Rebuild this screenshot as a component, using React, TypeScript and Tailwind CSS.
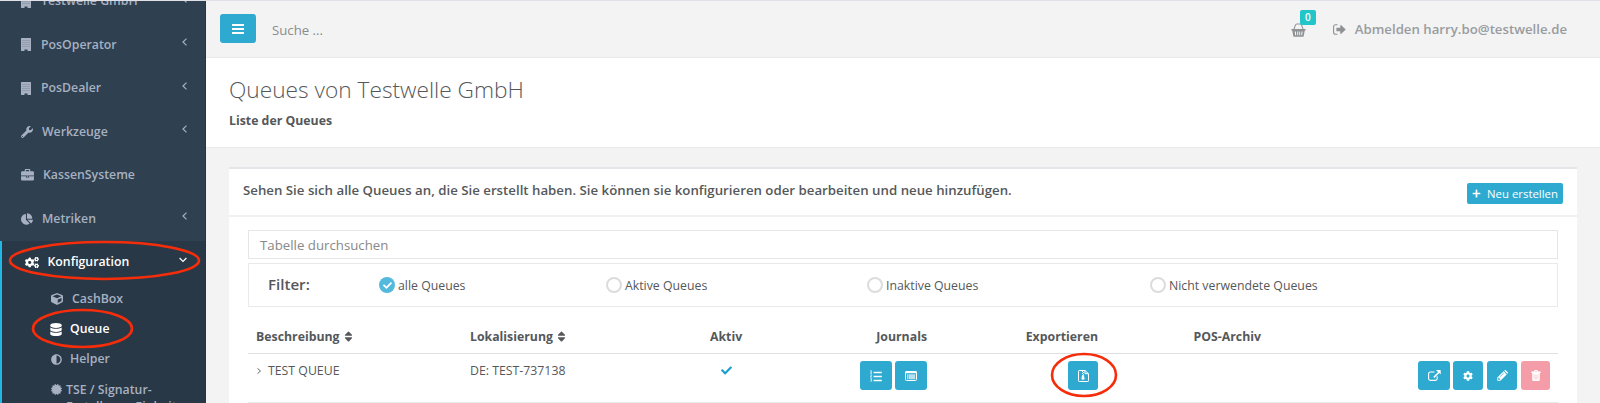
import React from "react";
import {
  FaWrench, FaChartPie, FaCogs, FaCube, FaDatabase, FaAdjust, FaCertificate,
  FaPlus, FaSort, FaCheck, FaCog,
} from "react-icons/fa";

type P = { className?: string };

const Building = ({ className }: P) => (
  <svg viewBox="0 0 10 13" className={className}>
    <path fill="currentColor" fillRule="evenodd" d="M.5 0h9q.5 0 .5.5v12q0 .5-.5.5H6.500v-1.500h-3v1.500h-3q-.5 0-.5-.5V.5Q0 0 .5 0z" />
    <path fill="none" stroke="#2f4050" strokeOpacity=".35" strokeDasharray="1 1" d="M1.500 2.500h7M1.500 4.500h7M1.500 6.500h7M1.500 8.500h7" />
  </svg>
);
const Briefcase = ({ className }: P) => (
  <svg viewBox="0 0 14 13" className={className} fill="currentColor">
    <path fillRule="evenodd" d="M4 2.500V1q0-1 1-1h4q1 0 1 1v1.500h2.800q1.200 0 1.200 1.200V7H0V3.700q0-1.200 1.200-1.200zM5.200 1.200v1.300h3.600V1.200z" />
    <path d="M0 7.800h5.300v1.400h3.400V7.800H14v3.500q0 1.200-1.200 1.200H1.200Q0 12.500 0 11.300zM6.200 7.200h1.600v1.200H6.200z" />
  </svg>
);
const Basket = ({ className }: P) => (
  <svg viewBox="0 0 16 15" className={className}>
    <path fill="none" stroke="currentColor" strokeWidth="1.100" d="M3 7l1.700-4.800Q5 1 6.300 1h3.400q1.300 0 1.600 1.200L13 7" />
    <path fill="currentColor" fillRule="evenodd" d="M1 6.500h14q.8 0 .8.800t-.8.800h-.3l-1.100 5.700q-.2 1-1.200 1H3.600q-1 0-1.200-1L1.300 8.100H1q-.8 0-.8-.8T1 6.500zM4 9l.4 4h1.100l-.3-4zM6.700 9v4h1V9zm2.100 0v4h1V9zm2.500 0-.4 4h1l.6-4z" />
  </svg>
);
const SignOut = ({ className }: P) => (
  <svg viewBox="0 0 13 11" className={className}>
    <path fill="none" stroke="currentColor" strokeWidth="1.100" d="M4.500.8H2.600Q.6.800.6 2.800v5.400q0 2 2 2h1.900" />
    <path fill="currentColor" d="M3.800 3.700h3.500V1.200q.2-.5.700-.2l4.500 4.200q.3.300 0 .6L8 10q-.5.300-.7-.2V7.300H3.800q-.4 0-.4-.4V4.100q0-.4.400-.4z" />
  </svg>
);
const Chevron = ({ className, d }: P & { d: string }) => (
  <svg viewBox="0 0 8 8" className={className}>
    <path fill="none" stroke="currentColor" strokeWidth="1.200" d={d} />
  </svg>
);
const ListOl = () => (
  <svg viewBox="0 0 12 12" className="h-[12px] w-[12px]" stroke="currentColor" fill="none">
    <path strokeWidth="1.300" d="M3.600 2.500h8.200M3.600 6.500h8.200M3.600 10.500h8.200" />
    <path strokeWidth=".8" d="M.4 1l.8-.6V3.200M.3 3.200h1.600M.4 5q1.300-.6 1.300.3L.4 7h1.500M.4 8.700h1.300L1 9.800q1 .1.700 1-.6.900-1.400.4" />
  </svg>
);
const WindowList = () => (
  <svg viewBox="0 0 12 10" className="h-[10px] w-[12px]">
    <rect x=".5" y=".5" width="11" height="9" rx="1" fill="none" stroke="currentColor" />
    <path stroke="currentColor" strokeWidth="2" d="M.5 1.200h11" />
    <path fill="currentColor" fillOpacity=".65" d="M2 3.200h1v5H2zM3.500 3.200H10.200v5H3.500z" />
  </svg>
);
const FileZip = () => (
  <svg viewBox="0 0 11 12" className="h-[12px] w-[11px]">
    <path fill="none" stroke="currentColor" d="M1.200.5H7l3.500 3.200v7.100q0 .7-.7.700H1.200q-.7 0-.7-.7V1.200q0-.7.700-.7zM7 .5v3.200h3.500" />
    <path fill="currentColor" d="M4 1h1v1H4zM5 2h1v1H5zM4 3h1v1H4zM5 4h1v1H5zM4.300 5h1.300l1 3.300q.1 1.500-1.600 1.500T3.400 8.300z" />
  </svg>
);
const ExternalLink = () => (
  <svg viewBox="0 0 13 11" className="h-[11px] w-[13px]">
    <path fill="none" stroke="currentColor" strokeWidth="1.100" d="M6.500 2h-4q-1.900 0-1.900 1.900v4.600q0 1.900 1.900 1.900h4.800q1.900 0 1.900-1.900V6.300" />
    <path fill="currentColor" d="M8.200 0h4.100q.4 0 .4.400v4.100l-1.400-1.400-4.900 4.800-1.100-1.100 4.800-4.900L8.200.4z" />
  </svg>
);
const Pencil = () => (
  <svg viewBox="0 0 11 11" className="h-[11px] w-[11px]" fill="currentColor">
    <path fillRule="evenodd" d="M.3 10.700V7.600L6.600 1.300l3.100 3.100-6.300 6.300zM1.200 8v1.800H3L3.400 9.400 1.600 7.600zM6.500 3 3 6.500l.4.300 3.500-3.500z" />
    <path d="M7.200.7l.5-.5q.5-.4 1 0l2.100 2.100q.4.500 0 1l-.5.500z" />
  </svg>
);
const Trash = () => (
  <svg viewBox="0 0 10 11" className="h-[11px] w-[10px]" fill="currentColor">
    <path fillRule="evenodd" d="M.3 1.600h2.400L3.300.4Q3.500 0 4 0h2q.5 0 .7.400l.6 1.200h2.400v1.300H.3zM3.900 1.600h2.200L5.800.9H4.200z" />
    <path fillRule="evenodd" d="M1.200 2.900h7.600v6.800Q8.800 11 7.700 11H2.300Q1.200 11 1.200 9.700zM2.800 4.400v5h.5v-5zm1.900 0v5h.6v-5zm2 0v5h.5v-5z" />
  </svg>
);
const LEFT = "M5.500 .6L2 4l3.500 3.400";

function NavItem({ icon, label, gap, arrow = true }: { icon: React.ReactNode; label: string; gap: string; arrow?: boolean }) {
  return (
    <div className="flex h-[43.500px] shrink-0 items-center pl-[21px] pr-[16px]">
      {icon}
      <span className={gap}>{label}</span>
      {arrow && <Chevron className="mb-[5px] ml-auto h-[8px] w-[8px]" d={LEFT} />}
    </div>
  );
}

function Ring({ className }: P) {
  return (
    <svg className={"pointer-events-none absolute overflow-visible " + className} preserveAspectRatio="none" viewBox="0 0 100 100">
      <ellipse cx="50" cy="50" rx="50" ry="50" fill="none" stroke="#f62d0b" strokeWidth="2.600" vectorEffect="non-scaling-stroke" />
    </svg>
  );
}

function Radio({ label, checked, className }: { label: string; checked?: boolean; className: string }) {
  return (
    <div className={"flex shrink-0 items-center " + className}>
      <span className={"flex h-4 w-4 shrink-0 items-center justify-center rounded-full " + (checked ? "bg-[#53b9dd] text-white" : "border-2 border-[#dcdcdc] bg-white")}>
        {checked && <FaCheck className="h-[9px] w-[9px]" />}
      </span>
      <span className="mt-[3px] pl-[3px] whitespace-nowrap">{label}</span>
    </div>
  );
}

function Btn({ children, className = "w-8 bg-[#2eaad1]" }: { children: React.ReactNode; className?: string }) {
  return <button className={"flex h-[29px] shrink-0 items-center justify-center rounded-[3px] text-white " + className}>{children}</button>;
}

export default function App() {
  return (
    <div className="flex h-[403px] w-[1600px] overflow-hidden border-t border-[#dfe1e7] bg-[#f3f3f4] font-['Open_Sans',sans-serif] text-[12.3px] text-[#55585b]">
      <aside className="flex h-[402px] w-[206px] shrink-0 flex-col overflow-hidden border-r border-[#22364a] bg-[#2f4050] font-semibold text-[#a7b1c2]">
        <div className="-mt-[21.500px] flex flex-col">
          <NavItem icon={<Building className="h-[13px] w-[10px]" />} label="Testwelle GmbH" gap="pl-[10px]" />
          <NavItem icon={<Building className="h-[13px] w-[10px]" />} label="PosOperator" gap="pl-[10px]" />
          <NavItem icon={<Building className="h-[13px] w-[10px]" />} label="PosDealer" gap="pl-[10px]" />
          <NavItem icon={<FaWrench className="h-[12px] w-[12px]" />} label="Werkzeuge" gap="pl-[9px]" />
          <NavItem icon={<Briefcase className="h-[12px] w-[13px]" />} label="KassenSysteme" gap="pl-[9px]" arrow={false} />
          <NavItem icon={<FaChartPie className="h-[12px] w-[12px]" />} label="Metriken" gap="pl-[9px]" />
        </div>
        <div className="h-[170px] border-l-2 border-[#23b7e5] bg-[#293846]">
          <div className="relative flex h-[43px] items-center pl-[23px] pr-[18px] text-white">
            <FaCogs className="h-[13px] w-[14px]" />
            <span className="pl-[8.500px]">Konfiguration</span>
            <Chevron className="mb-[5px] ml-auto h-[8px] w-[8px]" d="M.6 2L4 5.500 7.400 2" />
            <Ring className="left-[8px] top-[1px] h-[37px] w-[189px]" />
          </div>
          <div className="flex h-[31px] items-center pl-[49px]">
            <FaCube className="h-[12px] w-[12px]" /><span className="pl-[9px]">CashBox</span>
          </div>
          <div className="relative flex h-[30px] items-center pl-[48px] text-white">
            <FaDatabase className="h-[13px] w-[12px]" /><span className="pl-[8px]">Queue</span>
            <Ring className="-top-[5px] left-[31px] h-[37px] w-[99px]" />
          </div>
          <div className="flex h-[30px] items-center pl-[49px]">
            <FaAdjust className="h-[11px] w-[11px]" /><span className="pl-[8px]">Helper</span>
          </div>
          <div className="flex pl-[49px] pt-[6px] leading-[17px]">
            <FaCertificate className="mt-[3px] h-[11px] w-[11px] shrink-0" />
            <span className="pl-[4px]">TSE / Signatur-<br />Erstellungs-Einheit</span>
          </div>
        </div>
      </aside>

      <main className="flex min-w-0 flex-1 flex-col">
        <header className="flex h-[57px] shrink-0 items-center border-b border-[#e7e9eb] pl-[14px] pr-[33px]">
          <button className="mb-[1px] flex h-[29px] w-[36px] flex-col items-center justify-center gap-[2px] rounded-[3px] bg-[#2eaad1]">
            <span className="h-[2px] w-3 bg-white" /><span className="h-[2px] w-3 bg-white" /><span className="h-[2px] w-3 bg-white" />
          </button>
          <span className="pl-[16px] pt-[4px] text-[13.2px] text-[#8b8b8b]">Suche ...</span>
          <div className="relative ml-auto mt-[1px] text-[#8f9294]">
            <Basket className="h-[14px] w-[15px]" />
            <span className="absolute -top-[13px] left-[9px] flex h-[15px] w-[16px] items-center justify-center rounded-[2px] bg-[#23c6c8] text-[10px] font-semibold text-white">0</span>
          </div>
          <SignOut className="ml-[27px] mt-[1px] h-[11px] w-[13px] text-[#8f9294]" />
          <span className="pl-[9px] pt-[2px] text-[13.230px] font-semibold text-[#999c9e]">Abmelden harry.bo@testwelle.de</span>
        </header>
        <section className="h-[90px] shrink-0 border-b border-[#e9eaec] bg-white pl-[23px] pt-[15px]">
          <h1 className="text-[22.700px] font-light leading-[34px]">Queues von Testwelle GmbH</h1>
          <p className="mt-[5px] font-bold leading-[18px]">Liste der Queues</p>
        </section>
        <section className="ml-[23px] mt-[19px] h-[236px] w-[1348px] shrink-0 border-t-2 border-[#e4e6ea] bg-white">
          <div className="flex h-[48px] items-center justify-between border-b-2 border-[#f0f1f2] pl-[14px] pr-[14px]">
            <span className="mb-[2px] text-[13.250px] font-semibold">Sehen Sie sich alle Queues an, die Sie erstellt haben. Sie können sie konfigurieren oder bearbeiten und neue hinzufügen.</span>
            <button className="mt-[3px] flex h-[21px] w-[96px] items-center rounded-[2px] bg-[#2eaad1] pl-[5px] text-[11.400px] text-white">
              <FaPlus className="h-[9px] w-[9px]" /><span className="whitespace-nowrap pl-[6px]">Neu erstellen</span>
            </button>
          </div>
          <div className="px-[19px] pt-[13px]">
            <div className="flex h-[29px] items-center border border-[#e5e6e7] pl-[11px] pt-[2px] text-[13.250px] text-[#888]">Tabelle durchsuchen</div>
            <div className="mt-[4px] flex h-[44px] items-center border-[1.5px] border-[#e9e9ea] pl-[19px]">
              <span className="mb-[2px] w-[111px] text-[15.100px] font-semibold">Filter:</span>
              <Radio label="alle Queues" checked className="w-[227px]" />
              <Radio label="Aktive Queues" className="w-[261px]" />
              <Radio label="Inaktive Queues" className="w-[283px]" />
              <Radio label="Nicht verwendete Queues" className="" />
            </div>
            <div className="mt-[11px] grid h-[36px] grid-cols-[214px_240px_47px_170px_171px_163px_1fr] items-center border-b border-[#dfe0e1] pl-[8px] pr-[8px] pt-[4px] font-bold">
              <span className="flex items-center">Beschreibung<FaSort className="mb-[2px] ml-[4px] h-[13px] w-[9px]" /></span>
              <span className="flex items-center">Lokalisierung<FaSort className="mb-[2px] ml-[4px] h-[13px] w-[9px]" /></span>
              <span>Aktiv</span>
              <span className="text-right">Journals</span>
              <span className="text-right">Exportieren</span>
              <span className="text-right">POS-Archiv</span>
            </div>
            <div className="grid h-[49px] grid-cols-[214px_240px_47px_170px_171px_163px_1fr] border-b border-[#e7eaec] pl-[8px] pr-[8px] pt-[7px]">
              <span className="flex h-[20px] items-center"><Chevron className="h-[8px] w-[6px]" d="M2 .5L6 4 2 7.500" /><span className="pl-[6px] pt-[1px]">TEST QUEUE</span></span>
              <span className="flex h-[20px] items-center">DE: TEST-737138</span>
              <span className="pl-[11px] pt-[4px] text-[#1c9fce]"><FaCheck className="h-[11px] w-[11px]" /></span>
              <span className="flex justify-end gap-[3px]"><Btn><ListOl /></Btn><Btn><WindowList /></Btn></span>
              <span className="flex justify-end">
                <span className="relative">
                  <Btn className="w-[30px] bg-[#2eaad1]"><FileZip /></Btn>
                  <Ring className="-left-[16px] -top-[7px] h-[42px] w-[64px]" />
                </span>
              </span>
              <span />
              <span className="flex justify-end gap-[3px]">
                <Btn><ExternalLink /></Btn>
                <Btn className="w-[30px] bg-[#2eaad1]"><FaCog className="h-[10px] w-[10px]" /></Btn>
                <Btn className="ml-[1px] w-[30px] bg-[#2eaad1]"><Pencil /></Btn>
                <Btn className="ml-[1px] w-[29px] bg-[#f49ca8]"><Trash /></Btn>
              </span>
            </div>
          </div>
        </section>
      </main>
    </div>
  );
}
